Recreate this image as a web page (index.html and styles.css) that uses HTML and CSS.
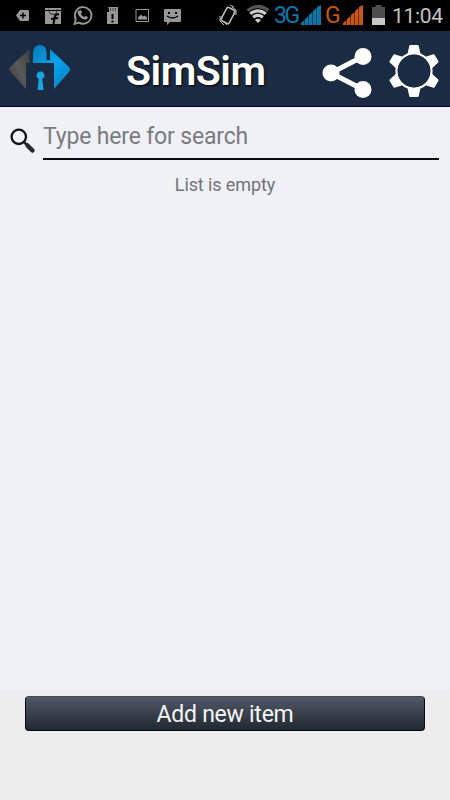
FILE: index.html
```html
<!DOCTYPE html>
<html lang="en">
  <head>
    <meta charset="UTF-8" />
    <meta name="viewport" content="width=device-width, initial-scale=1.0" />
    <title>SimSim</title>
    <link rel="stylesheet" href="styles.css">
  </head>

  <body>
    <div class="status-bar">
      <svg class="notifications" width="190" height="31" viewBox="0 0 190 31" fill="#979797">
        <path d="M20 10h8l1 1v9l-1 1h-8l-4-5.500z" />
        <path d="M20 15.500h6M23 12.500v6" stroke="#000" stroke-width="1.400" />
        <path d="M45 8h16v2H45zM45 11h16v13H45z" />
        <path d="M49 9v2a4 3.500 0 0 0 8 0V9" fill="none" stroke="#333" />
        <path d="M59 14.500q-4-1-4.500 3.500l-1 6M51 19l7-1" fill="none" stroke="#000" stroke-width="2" />
        <path d="M74.500 24l1.300-4.700a8.300 8.300 0 1 1 3.200 3.300z" fill="none" stroke="#979797" stroke-width="1.800" />
        <path d="M79 11q2-2 3 1l-1 2q1 2 3 3l2-1q3 1 1 3-4 2-8-3-3-4 0-6z" />
        <path d="M108 7h10v5h-9v-3zM107 12h11v12h-11z" />
        <path d="M110.500 8v3M113 8v3M115.500 8v3" stroke="#444" stroke-width="1" />
        <path d="M112.500 14v5M112.500 20.500v2" stroke="#000" stroke-width="2" />
        <path d="M136 9.500h12.500v12H136z" fill="none" stroke="#979797" />
        <path d="M138 19.500v-2l3-3 2 2 2-1 2 2v2z" />
        <path d="M165 9h15q1 0 1 1v11q0 1-1 1h-10l-3 3v-3h-2q-1 0-1-1V10q0-1 1-1z" />
        <path d="M168 12h2v2h-2zM175 12h2v2h-2z" fill="#000" />
        <path d="M167 16q5.500 4 11 0" fill="none" stroke="#000" stroke-width="1.500" />
      </svg>
      <svg class="vibrate" width="18" height="31" viewBox="0 0 18 31" fill="none" stroke="#bbb">
        <rect x="4.500" y="8" width="9" height="15" rx="1.500" stroke-width="1.500" transform="rotate(28 9 15.500)" />
        <path d="M1 16v5l4 4M3 16v3M13 7l4 3v5M11 5l4 2M15 12v3M5 22l3 3" stroke-width="1" />
      </svg>
      <svg class="wifi" width="24" height="31" viewBox="0 0 24 31" fill="none" stroke="#ccc" stroke-width="3.300">
        <path d="M1.500 10.500Q12 2.500 22.500 10.500" stroke="#555" />
        <path d="M4.200 13.800Q12 8 19.800 13.800M7.200 17.300Q12 13.500 16.800 17.300" />
        <path d="M9 20q3-2.500 6 0l-3 3z" fill="#ccc" stroke="none" />
      </svg>
      <span class="network network-3g">3G</span>
      <svg class="signal" width="20" height="31" viewBox="0 0 20 31" fill="#0878ac">
        <path d="M0 25v-2l3.500-3v5zM4 25v-6l3.500-3v9zM8 25v-10l3.500-3v13zM12 25V11l3.500-3v17zM16 25V7l4-2v20z" />
      </svg>
      <span class="network network-g">G</span>
      <svg class="signal" width="20" height="31" viewBox="0 0 20 31" fill="#c9570c">
        <path d="M0 25v-2l3.500-3v5zM4 25v-6l3.500-3v9zM8 25v-10l3.500-3v13zM12 25V11l3.500-3v17zM16 25V7l4-2v20z" />
      </svg>
      <svg class="battery" width="13" height="31" viewBox="0 0 13 31">
        <path d="M3.500 5h6v2H13v11H0V7h3.500z" fill="#4d4d4d" />
        <path d="M0 18h13v7H0z" fill="#c8c8c8" />
      </svg>
      <span class="clock">11:04</span>
    </div>

    <header class="header">
      <svg class="logo" width="62" height="48" viewBox="0 0 62 48">
        <defs>
          <linearGradient id="grey" x1="0" y1="1" x2="1" y2="0">
            <stop offset="0" stop-color="#333" />
            <stop offset="0.500" stop-color="#5a5a5a" />
            <stop offset="1" stop-color="#3c3c3c" />
          </linearGradient>
          <linearGradient id="blue" x1="0" y1="0" x2="1" y2="1">
            <stop offset="0" stop-color="#0879b5" />
            <stop offset="0.500" stop-color="#07a4ec" />
            <stop offset="1" stop-color="#087dbb" />
          </linearGradient>
        </defs>
        <path d="M20.500 5v14H17v26L0 26v-2z" fill="url(#grey)" />
        <path d="M24 19V8q1-7 7-7 6 0 6.500 7v8H41V5l19 18q2 2.500 0 5L45 45V19z" fill="url(#blue)" />
        <path d="M28.500 46l1.200-11a4 4 0 1 1 3.600 0l1.200 11z" fill="#1aa4df" />
      </svg>
      <h1 class="title">SimSim</h1>
      <svg class="share" width="50" height="52" viewBox="0 0 50 52" fill="#fff">
        <path d="M41 9.500L9 26 41 42.500" fill="none" stroke="#fff" stroke-width="5" />
        <circle cx="9" cy="26" r="8.500" />
        <circle cx="41" cy="9.500" r="8.500" />
        <circle cx="41" cy="42.500" r="8.500" />
      </svg>
      <svg class="settings" width="50" height="54" viewBox="-25 -27 50 54">
        <defs>
          <path id="tooth" d="M-6.500-17L-4.700-25.300Q-4.500-26-3.500-26h7q1 0 1.200.700L6.500-17z" />
        </defs>
        <circle r="17.500" fill="none" stroke="#fff" stroke-width="2.200" />
        <g fill="#fff">
          <use href="#tooth" />
          <use href="#tooth" transform="rotate(60)" />
          <use href="#tooth" transform="rotate(120)" />
          <use href="#tooth" transform="rotate(180)" />
          <use href="#tooth" transform="rotate(240)" />
          <use href="#tooth" transform="rotate(300)" />
        </g>
        <circle r="16.300" fill="#1a2b43" />
      </svg>
    </header>

    <main class="content">
      <div class="search">
        <svg class="search-icon" width="26" height="26" viewBox="0 0 26 26">
          <path d="M14.500 14.500l3 3" stroke="#222" stroke-width="2.500" />
          <path d="M17.500 17.500l5 5" stroke="#292929" stroke-width="4.500" stroke-linecap="round" />
          <circle cx="8.800" cy="8.800" r="7.200" fill="none" stroke="#111" stroke-width="2.300" />
        </svg>
        <input type="text" class="search-input" placeholder="Type here for search" />
      </div>
      <p class="empty">List is empty</p>
    </main>

    <footer class="footer">
      <button class="add-btn">Add new item</button>
    </footer>
  </body>
</html>
```

FILE: styles.css
```css
* {
  box-sizing: border-box;
}

body {
  margin: 0;
  height: 800px;
  display: flex;
  flex-direction: column;
  overflow: hidden;
  background-color: #f0f1f7;
  font-family: Roboto, sans-serif;
}

svg {
  display: block;
  flex: none;
}

.status-bar {
  height: 31px;
  display: flex;
  align-items: center;
  background-color: #000;
}

.vibrate {
  margin-left: 29px;
}

.wifi {
  margin-left: 9px;
}

.network {
  font-size: 23px;
  line-height: 31px;
  letter-spacing: -2.5px;
}

.network-3g {
  width: 27px;
  margin-left: 4px;
  color: #0878ac;
}

.network-g {
  width: 18px;
  margin-left: 4px;
  color: #c9570c;
}

.battery {
  margin-left: 9px;
}

.clock {
  margin-left: 7px;
  padding-top: 2px;
  color: #c3c3c3;
  font-size: 21px;
  line-height: 29px;
  letter-spacing: -0.3px;
}

.header {
  height: 76px;
  display: flex;
  align-items: center;
  padding-left: 9px;
  background-color: #1a2b43;
  border-bottom: 1px solid #020527;
}

.logo {
  margin-bottom: 2px;
}

.title {
  width: 252px;
  margin: 0 0 0 -1px;
  padding: 4px 0 0 56px;
  color: #fff;
  font-size: 41px;
  font-weight: 600;
  line-height: 72px;
  letter-spacing: -0.5px;
  text-shadow: 1px 1px 2px #000;
}

.share {
  margin-top: 9px;
}

.settings {
  margin: 4px 0 0 17px;
}

.content {
  flex: 1;
}

.search {
  display: flex;
  align-items: flex-start;
  padding: 13px 11px 0 10px;
}

.search-icon {
  margin: 8px 7px 0 0;
}

.search-input {
  flex: 1;
  min-width: 0;
  height: 40px;
  padding: 0 0 6px;
  border: 0;
  border-bottom: 2px solid #090a0d;
  outline: 0;
  background: none;
  color: #222;
  font-family: inherit;
  font-size: 23px;
  letter-spacing: -0.17px;
}

.search-input::placeholder {
  color: #7b7b7f;
}

.empty {
  margin: 13px 0 0;
  color: #737377;
  font-size: 18px;
  line-height: 24px;
  letter-spacing: -0.1px;
  text-align: center;
}

.footer {
  height: 110px;
  padding: 6px 25px;
  background-color: #ededed;
}

.add-btn {
  display: block;
  width: 100%;
  height: 35px;
  padding: 3px 0 0;
  border: 1px solid #05080d;
  border-top-color: #45474d;
  border-radius: 4px;
  background: linear-gradient(#505966, #202832);
  color: #f5f5f5;
  font-family: inherit;
  font-size: 23px;
  line-height: 30px;
  letter-spacing: -0.25px;
}
```
